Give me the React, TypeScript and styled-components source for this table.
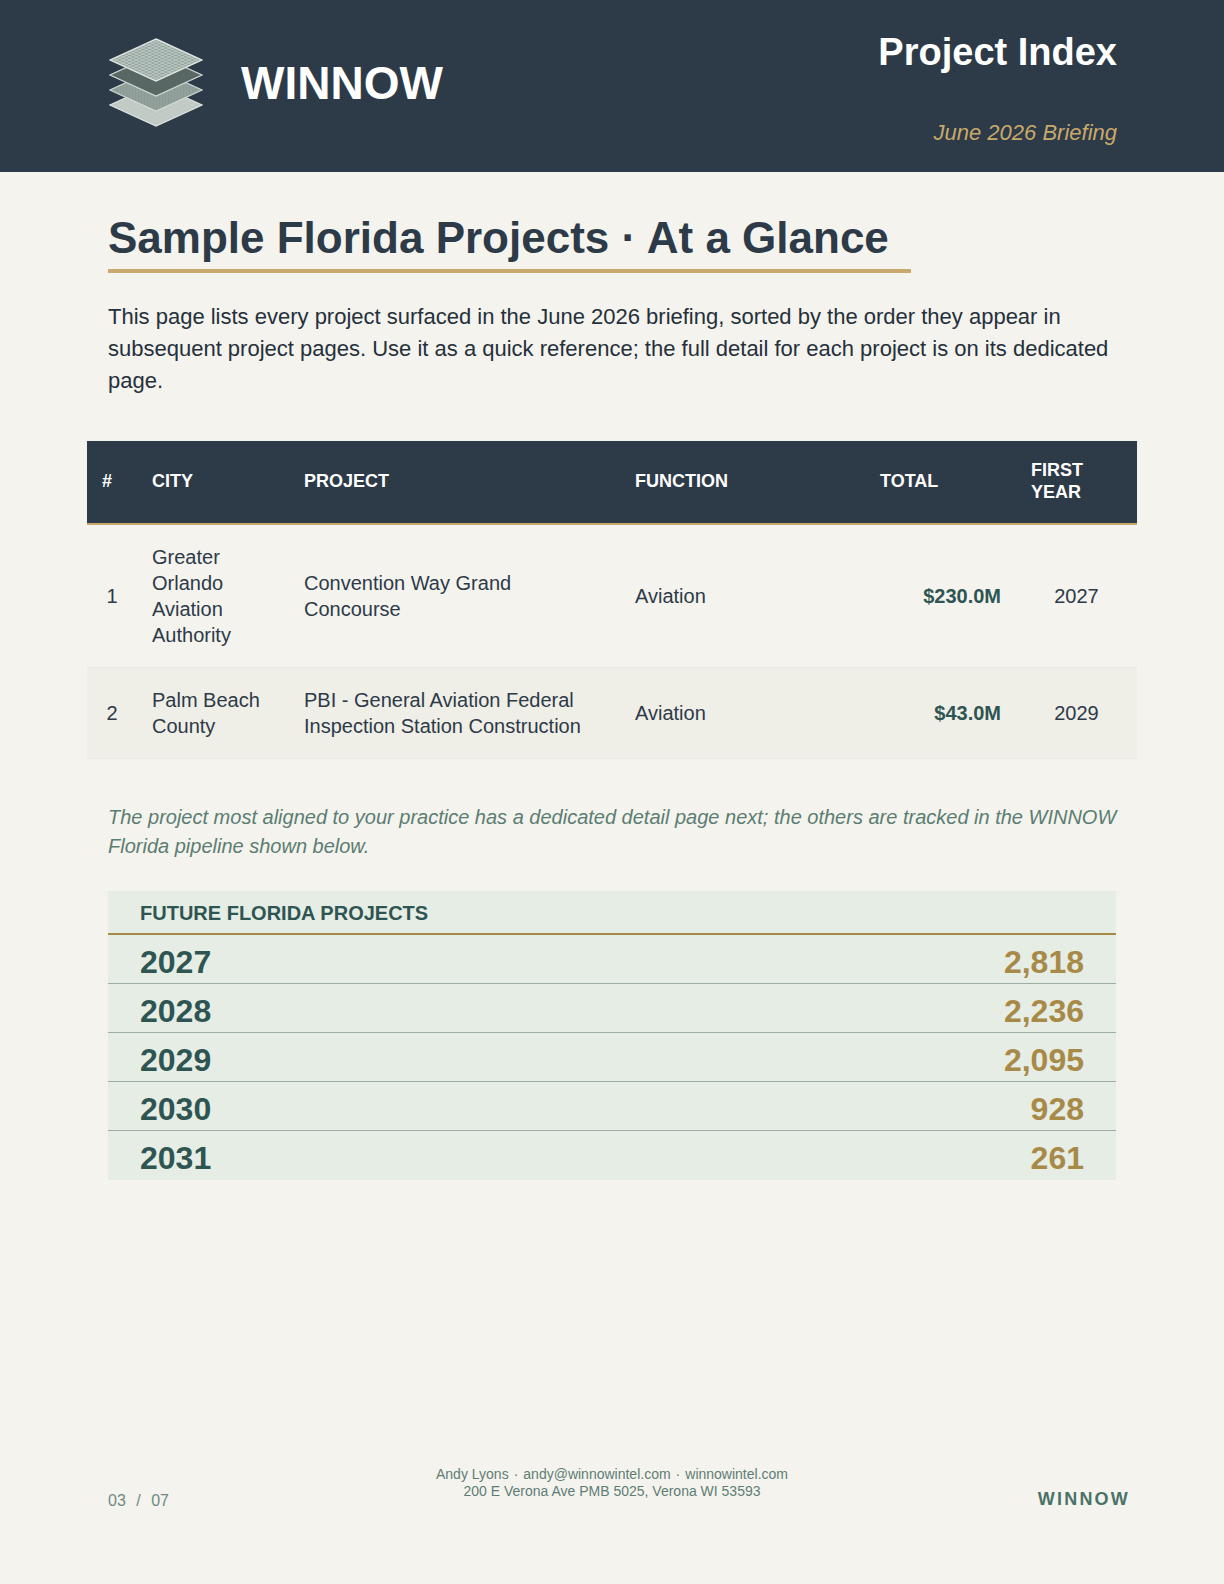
import React from 'react';
import styled, { createGlobalStyle } from 'styled-components';

const GlobalStyle = createGlobalStyle`
  html, body {
    margin: 0;
    padding: 0;
    background: #f4f3ee;
  }
  body {
    font-family: "Liberation Sans", Arial, Helvetica, sans-serif;
    -webkit-font-smoothing: antialiased;
  }
  * { box-sizing: border-box; }
`;

const Page = styled.div`
  width: 1224px;
  min-height: 1584px;
  display: flex;
  flex-direction: column;
  background: #f4f3ee;
`;

const Header = styled.header`
  height: 172px;
  background: #2d3a48;
  display: flex;
  justify-content: space-between;
  align-items: stretch;
  padding: 0 107px 0 109px;
`;

const Brand = styled.div`
  display: flex;
  align-items: center;
  gap: 38px;
  padding-bottom: 6px;
`;

const BrandName = styled.span`
  font-size: 46px;
  font-weight: 700;
  color: #ffffff;
  line-height: 1;
  letter-spacing: 0;
`;

const TitleBlock = styled.div`
  display: flex;
  flex-direction: column;
  align-items: flex-end;
  justify-content: space-between;
  padding: 30px 0 26px;
`;

const DocTitle = styled.div`
  font-size: 38px;
  font-weight: 700;
  line-height: 1.2;
  color: #ffffff;
`;

const DocDate = styled.div`
  font-size: 22px;
  font-style: italic;
  line-height: 1.2;
  color: #c8a96a;
`;

const Main = styled.main`
  padding: 40px 108px 0;
  display: flex;
  flex-direction: column;
  align-items: flex-start;
`;

const Heading = styled.h1`
  display: inline-block;
  margin: 0;
  padding: 0 22px 4px 0;
  font-size: 44px;
  font-weight: 700;
  line-height: 1.2;
  color: #2d3a48;
  border-bottom: 4px solid #c9a96e;
`;

const Intro = styled.p`
  margin: 28px 0 0;
  font-size: 22px;
  line-height: 1.45;
  color: #25303b;
`;

const Table = styled.table`
  margin: 45px -21px 0;
  width: calc(100% + 42px);
  border-collapse: collapse;
  table-layout: fixed;
`;

type Align = 'left' | 'center' | 'right';

const Th = styled.th`
  background: #2d3a48;
  color: #ffffff;
  font-size: 18px;
  font-weight: 700;
  line-height: 1.2;
  text-align: left;
  text-transform: uppercase;
  padding: 19px 15px;
  vertical-align: middle;
  border-bottom: 2px solid #c9a96e;
`;

const Tr = styled.tr<{ $alt?: boolean }>`
  background: ${(p) => (p.$alt ? '#efeee7' : '#f4f3ee')};
`;

const Td = styled.td<{ $align?: Align; $strong?: boolean }>`
  padding: 19px 15px;
  font-size: 20px;
  line-height: 26px;
  color: ${(p) => (p.$strong ? '#2e5552' : '#2d3a48')};
  font-weight: ${(p) => (p.$strong ? 700 : 400)};
  text-align: ${(p) => p.$align || 'left'};
  vertical-align: middle;
  border-bottom: 1px solid #e9e7e0;
`;

const Note = styled.p`
  margin: 44px -16px 0 0;
  font-size: 20px;
  font-style: italic;
  line-height: 29px;
  color: #5b7d72;
`;

const Pipeline = styled.section`
  margin-top: 30px;
  width: 100%;
  background: #e6ede5;
`;

const PipelineTitle = styled.div`
  padding: 10px 32px 8px;
  font-size: 20px;
  font-weight: 700;
  line-height: 24px;
  color: #2e5552;
  border-bottom: 2px solid #a88a48;
`;

const PipelineRow = styled.div`
  display: flex;
  justify-content: space-between;
  align-items: baseline;
  padding: 11px 32px 5px;
  font-size: 32px;
  font-weight: 700;
  line-height: 32px;
  border-bottom: 1px solid #9cada7;
  &:last-child {
    border-bottom: none;
    padding-bottom: 6px;
  }
`;

const Year = styled.span`
  color: #2e5552;
`;

const Count = styled.span`
  color: #a88a48;
`;

const Footer = styled.footer`
  margin-top: auto;
  display: grid;
  grid-template-columns: 1fr auto 1fr;
  align-items: end;
  padding: 0 94px 71px;
`;

const PageNo = styled.div`
  justify-self: start;
  padding: 0 0 3px 14px;
  font-size: 16px;
  line-height: 1.2;
  color: #6d8a83;
`;

const Slash = styled.span`
  margin: 0 6px;
`;

const Contact = styled.div`
  margin-bottom: 13px;
  font-size: 14px;
  line-height: 17px;
  color: #5f7d75;
  text-align: center;
`;

const Sep = styled.span`
  margin: 0 5px;
`;

const FooterBrand = styled.div`
  justify-self: end;
  padding-bottom: 2px;
  font-size: 18px;
  font-weight: 700;
  line-height: 1.2;
  letter-spacing: 2.2px;
  color: #4a7266;
`;

const HW = 46;
const HH = 21;
const CX = 47;

const diamond = (cy: number) =>
  `${CX},${cy - HH} ${CX + HW},${cy} ${CX},${cy + HH} ${CX - HW},${cy}`;

const gridLines = (cy: number, n: number) => {
  const T = [CX, cy - HH];
  const R = [CX + HW, cy];
  const B = [CX, cy + HH];
  const L = [CX - HW, cy];
  const out: number[][] = [];
  for (let i = 1; i < n; i++) {
    const t = i / n;
    out.push([
      L[0] + t * (T[0] - L[0]),
      L[1] + t * (T[1] - L[1]),
      B[0] + t * (R[0] - B[0]),
      B[1] + t * (R[1] - B[1]),
    ]);
    out.push([
      T[0] + t * (R[0] - T[0]),
      T[1] + t * (R[1] - T[1]),
      L[0] + t * (B[0] - L[0]),
      L[1] + t * (B[1] - L[1]),
    ]);
  }
  return out;
};

const vLines = (cy: number, step: number) => {
  const out: number[][] = [];
  for (let x = CX - HW + step; x < CX + HW; x += step) {
    const d = HH * (1 - Math.abs(x - CX) / HW);
    out.push([x, cy - d, x, cy + d]);
  }
  return out;
};

const Logo: React.FC = () => (
  <svg width="94" height="90" viewBox="0 0 94 90" aria-hidden="true">
    <polygon points={diamond(67)} fill="#c0c9c3" stroke="#dfe5e1" strokeWidth="1.3" />
    {gridLines(67, 9).map((l, i) => (
      <line key={`d${i}`} x1={l[0]} y1={l[1]} x2={l[2]} y2={l[3]} stroke="#d6ddd8" strokeWidth="0.4" opacity="0.5" />
    ))}
    <polygon points={diamond(52)} fill="#8b9994" stroke="#d3dbd6" strokeWidth="1.3" />
    {vLines(52, 3).map((l, i) => (
      <line key={`c${i}`} x1={l[0]} y1={l[1]} x2={l[2]} y2={l[3]} stroke="#aab6b0" strokeWidth="0.6" />
    ))}
    <polygon points={diamond(37)} fill="#596764" stroke="#cfd8d3" strokeWidth="1.3" />
    <polygon points={diamond(22)} fill="#95a49e" stroke="#e0e6e2" strokeWidth="1.5" />
    {gridLines(22, 14).map((l, i) => (
      <line key={`a${i}`} x1={l[0]} y1={l[1]} x2={l[2]} y2={l[3]} stroke="#cfd8d3" strokeWidth="0.6" />
    ))}
  </svg>
);

type Project = {
  n: number;
  city: string;
  project: string;
  fn: string;
  total: string;
  year: string;
};

const projects: Project[] = [
  {
    n: 1,
    city: 'Greater Orlando Aviation Authority',
    project: 'Convention Way Grand Concourse',
    fn: 'Aviation',
    total: '$230.0M',
    year: '2027',
  },
  {
    n: 2,
    city: 'Palm Beach County',
    project: 'PBI - General Aviation Federal Inspection Station Construction',
    fn: 'Aviation',
    total: '$43.0M',
    year: '2029',
  },
];

const pipeline = [
  { year: '2027', count: '2,818' },
  { year: '2028', count: '2,236' },
  { year: '2029', count: '2,095' },
  { year: '2030', count: '928' },
  { year: '2031', count: '261' },
];

export default function App() {
  return (
    <>
      <GlobalStyle />
      <Page>
        <Header>
          <Brand>
            <Logo />
            <BrandName>WINNOW</BrandName>
          </Brand>
          <TitleBlock>
            <DocTitle>Project Index</DocTitle>
            <DocDate>June 2026 Briefing</DocDate>
          </TitleBlock>
        </Header>

        <Main>
          <Heading>Sample Florida Projects · At a Glance</Heading>
          <Intro>
            This page lists every project surfaced in the June 2026 briefing, sorted by the order they
            appear in subsequent project pages. Use it as a quick reference; the full detail for each
            project is on its dedicated page.
          </Intro>

          <Table>
            <colgroup>
              <col style={{ width: 50 }} />
              <col style={{ width: 152 }} />
              <col style={{ width: 331 }} />
              <col style={{ width: 245 }} />
              <col style={{ width: 151 }} />
              <col style={{ width: 121 }} />
            </colgroup>
            <thead>
              <tr>
                <Th>#</Th>
                <Th>City</Th>
                <Th>Project</Th>
                <Th>Function</Th>
                <Th>Total</Th>
                <Th>First Year</Th>
              </tr>
            </thead>
            <tbody>
              {projects.map((p, i) => (
                <Tr key={p.n} $alt={i % 2 === 1}>
                  <Td $align="center">{p.n}</Td>
                  <Td>{p.city}</Td>
                  <Td>{p.project}</Td>
                  <Td>{p.fn}</Td>
                  <Td $align="right" $strong>
                    {p.total}
                  </Td>
                  <Td $align="center">{p.year}</Td>
                </Tr>
              ))}
            </tbody>
          </Table>

          <Note>
            The project most aligned to your practice has a dedicated detail page next; the others are
            tracked in the WINNOW Florida pipeline shown below.
          </Note>

          <Pipeline>
            <PipelineTitle>FUTURE FLORIDA PROJECTS</PipelineTitle>
            {pipeline.map((r) => (
              <PipelineRow key={r.year}>
                <Year>{r.year}</Year>
                <Count>{r.count}</Count>
              </PipelineRow>
            ))}
          </Pipeline>
        </Main>

        <Footer>
          <PageNo>
            03 <Slash>/</Slash> 07
          </PageNo>
          <Contact>
            Andy Lyons<Sep>·</Sep>andy@winnowintel.com<Sep>·</Sep>winnowintel.com
            <br />
            200 E Verona Ave PMB 5025, Verona WI 53593
          </Contact>
          <FooterBrand>WINNOW</FooterBrand>
        </Footer>
      </Page>
    </>
  );
}
